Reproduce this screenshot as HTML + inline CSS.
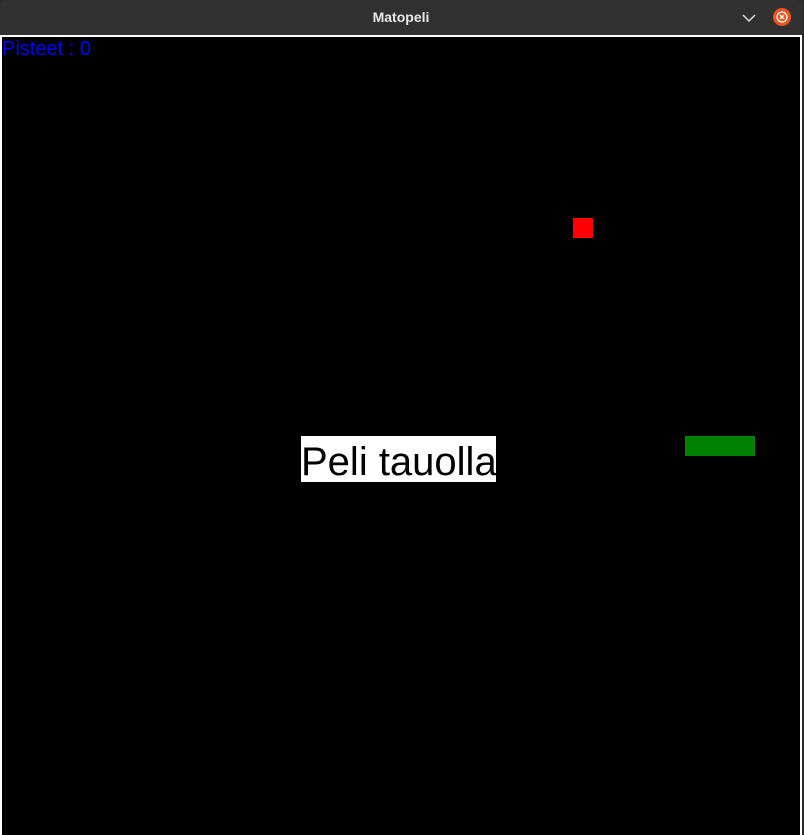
<!DOCTYPE html>
<html><head><meta charset="utf-8"><style>
html,body{margin:0;padding:0;width:804px;height:835px;overflow:hidden;background:#2b2b2b;}
.title{position:absolute;left:0;top:0;width:802px;height:35px;background:#323131;border-radius:6px 6px 0 0;}
.title span{position:absolute;left:0;right:0;top:9px;text-align:center;color:#e8e8e8;font:bold 14px "Liberation Sans",sans-serif;}
.line{position:absolute;left:0;top:35px;width:802px;height:800px;background:#fff;}
.canvas{position:absolute;left:2px;top:37px;width:798px;height:798px;background:#000;}
.score{position:absolute;left:2px;top:38px;color:#0000ff;font:20px "Liberation Sans",sans-serif;line-height:23px;}
.pause{position:absolute;left:301px;top:436px;width:195px;height:46px;background:#fff;color:#000;font:40px "Liberation Sans",sans-serif;line-height:46px;text-align:center;white-space:nowrap;}
.pause span{position:relative;top:3px;}
</style></head><body>
<div class="title"><span>Matopeli</span>
<svg style="position:absolute;left:741px;top:12px" width="16" height="12"><path d="M2 3 L8 9 L14 3" stroke="#ddd" stroke-width="1.5" fill="none"/></svg>
<svg style="position:absolute;left:772px;top:7px" width="20" height="20"><circle cx="10" cy="10" r="9" fill="#e95420"/><circle cx="10" cy="10" r="5" fill="none" stroke="#fff" stroke-width="1.3"/><path d="M8 8 L12 12 M12 8 L8 12" stroke="#fff" stroke-width="1.3"/></svg>
</div>
<div class="line"></div>
<div class="canvas"></div>
<div class="score">Pisteet : 0</div>
<div style="position:absolute;left:573px;top:218px;width:20px;height:20px;background:#ff0000"></div>
<div style="position:absolute;left:685px;top:436px;width:70px;height:20px;background:#008000"></div>
<div class="pause"><span>Peli tauolla</span></div>
</body></html>
